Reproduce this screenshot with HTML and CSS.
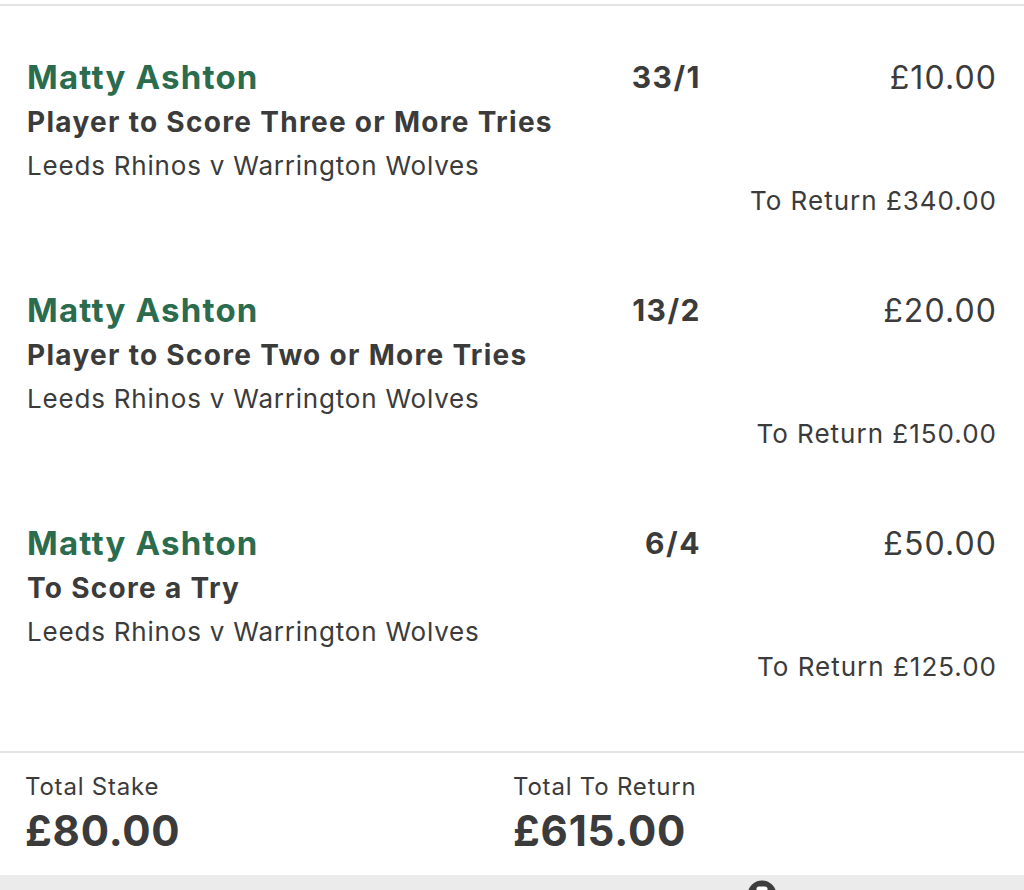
FILE: index.html
```html
<!DOCTYPE html>
<html lang="en">
<head>
<meta charset="utf-8">
<title>Bet Slip</title>
<link rel="stylesheet" href="styles.css">
</head>
<body>
<div class="slip">
  <div class="bets">
    <div class="bet">
      <div class="name">Matty Ashton</div>
      <div class="odds">33/1</div>
      <div class="stake">£10.00</div>
      <div class="market">Player to Score Three or More Tries</div>
      <div class="event">Leeds Rhinos v Warrington Wolves</div>
      <div class="return">To Return £340.00</div>
    </div>
    <div class="bet">
      <div class="name">Matty Ashton</div>
      <div class="odds">13/2</div>
      <div class="stake">£20.00</div>
      <div class="market">Player to Score Two or More Tries</div>
      <div class="event">Leeds Rhinos v Warrington Wolves</div>
      <div class="return">To Return £150.00</div>
    </div>
    <div class="bet">
      <div class="name">Matty Ashton</div>
      <div class="odds">6/4</div>
      <div class="stake">£50.00</div>
      <div class="market">To Score a Try</div>
      <div class="event">Leeds Rhinos v Warrington Wolves</div>
      <div class="return">To Return £125.00</div>
    </div>
  </div>
  <div class="totals">
    <div class="total">
      <div class="total-label">Total Stake</div>
      <div class="total-value">£80.00</div>
    </div>
    <div class="total">
      <div class="total-label">Total To Return</div>
      <div class="total-value">£615.00</div>
    </div>
  </div>
  <div class="toolbar">
    <svg class="tool-icon" width="30" height="30" viewBox="0 0 30 30" aria-hidden="true">
      <circle cx="15" cy="15" r="14.5" fill="#3d3d3d"/>
      <rect x="9.5" y="6.5" width="11" height="12" rx="2.5" fill="#ffffff"/>
    </svg>
  </div>
</div>
</body>
</html>
```

FILE: styles.css
```css
html, body {
  margin: 0;
  padding: 0;
  background: #ffffff;
}

body {
  font-family: "Inter", "Liberation Sans", sans-serif;
  color: #3b3b3b;
  width: 1024px;
  height: 890px;
  overflow: hidden;
}

.slip {
  margin-top: 4px;
  border-top: 2px solid #e4e4e4;
}

.bets {
  display: flex;
  flex-direction: column;
  gap: 73px;
  padding: 49px 27px 70px 27px;
  border-bottom: 2px solid #e4e4e4;
}

.bet {
  display: grid;
  grid-template-columns: 1fr 160px 297px;
  grid-template-rows: 44px 46px 40px 30px;
  align-items: center;
}

.name {
  grid-column: 1;
  grid-row: 1;
  font-size: 33px;
  font-weight: 700;
  color: #2b6c4f;
  letter-spacing: 1.2px;
}

.odds {
  grid-column: 2;
  grid-row: 1;
  text-align: right;
  font-size: 30px;
  font-weight: 700;
  letter-spacing: 1.5px;
  margin-right: -1px;
}

.stake {
  grid-column: 3;
  grid-row: 1;
  text-align: right;
  font-size: 32px;
  font-weight: 400;
  letter-spacing: 1.1px;
}

.market {
  grid-column: 1 / 4;
  grid-row: 2;
  font-size: 28px;
  font-weight: 650;
  letter-spacing: 1.3px;
}

.event {
  grid-column: 1 / 4;
  grid-row: 3;
  font-size: 26px;
  font-weight: 400;
  letter-spacing: 0.8px;
}

.return {
  grid-column: 1 / 4;
  grid-row: 4;
  text-align: right;
  font-size: 26px;
  font-weight: 400;
  letter-spacing: 1px;
}

.totals {
  display: grid;
  grid-template-columns: 488px 1fr;
  padding: 19px 25px 15px 25px;
}

.total-label {
  font-size: 24px;
  line-height: 30px;
  font-weight: 400;
  letter-spacing: 0.8px;
}

.total-value {
  font-size: 42px;
  line-height: 58px;
  font-weight: 700;
  letter-spacing: 0.8px;
}

.toolbar {
  height: 15px;
  background: #ebebeb;
  overflow: hidden;
  display: flex;
  padding-left: 747px;
  padding-top: 5px;
}

.tool-icon {
  flex: none;
}
```
